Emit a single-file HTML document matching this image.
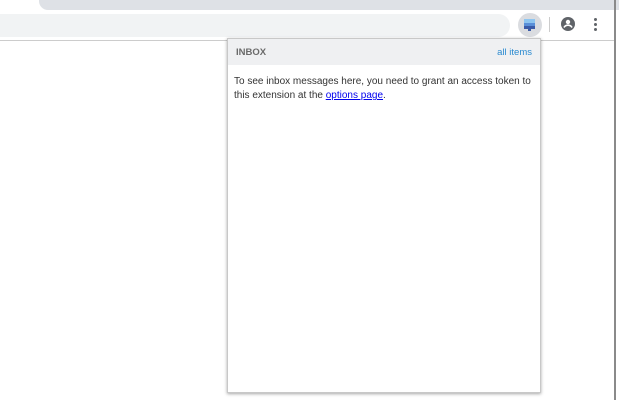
<!DOCTYPE html>
<html><head><style>
body{margin:0;width:640px;height:400px;position:relative;background:#fff;overflow:hidden;font-family:"Liberation Sans",sans-serif}
.tab{position:absolute;left:39px;top:-10px;width:580px;height:20px;background:#dee1e6;border-radius:0 0 0 9px}
.addr{position:absolute;left:-20px;top:14px;width:530px;height:23px;background:#f1f3f4;border-radius:12px}
.hl{position:absolute;left:0;top:40px;width:615px;height:1px;background:#ccc}
.vr{position:absolute;left:614px;top:0;width:2px;height:400px;background:#8a8a8a}
.pop{position:absolute;left:227px;top:38px;width:312px;height:353px;background:#fff;border:1px solid #c8c8c8;box-shadow:0 1px 3px rgba(0,0,0,.35)}
.hd{height:26px;background:#eff0f2;position:relative}
.hd b{position:absolute;left:8px;top:8px;font-size:9.5px;color:#6a6a6a}
.hd a{position:absolute;right:8px;top:8px;font-size:9.5px;color:#2a8ad0}
.tx{padding:10px 4px 0 6px;font-size:10px;line-height:14px;color:#333}
.tx a{color:#00e;text-decoration:underline}
</style></head><body>
<div class="tab"></div>
<div class="addr"></div>
<div class="hl"></div>
<div class="vr"></div>
<div style="position:absolute;left:518px;top:13px;width:24px;height:24px;border-radius:12px;background:#dadce0"></div>
<div style="position:absolute;left:524px;top:19px;width:11px;height:4px;background:#8ec5f0"></div>
<div style="position:absolute;left:524px;top:23px;width:11px;height:3px;background:#5a8fd8"></div>
<div style="position:absolute;left:524px;top:26px;width:11px;height:3px;background:#3b5ba8"></div>
<div style="position:absolute;left:528px;top:29px;width:3px;height:2px;background:#3b5ba8"></div>
<div style="position:absolute;left:549px;top:17px;width:1px;height:15px;background:#ccc"></div>
<svg style="position:absolute;left:561px;top:17px" width="14" height="14" viewBox="0 0 14 14"><circle cx="7" cy="7" r="7" fill="#5f6368"/><circle cx="7" cy="5" r="2.2" fill="#fff"/><path d="M3 10.5c1-1.8 2.5-2.3 4-2.3s3 .5 4 2.3" stroke="#fff" stroke-width="1.6" fill="none"/></svg>
<div style="position:absolute;left:594px;top:18px;width:3px;height:3px;border-radius:2px;background:#5f6368"></div>
<div style="position:absolute;left:594px;top:23px;width:3px;height:3px;border-radius:2px;background:#5f6368"></div>
<div style="position:absolute;left:594px;top:28px;width:3px;height:3px;border-radius:2px;background:#5f6368"></div>
<div class="pop"><div class="hd"><b>INBOX</b><a>all items</a></div>
<div class="tx">To see inbox messages here, you need to grant an access token to this extension at the <a>options page</a>.</div></div>
</body></html>
